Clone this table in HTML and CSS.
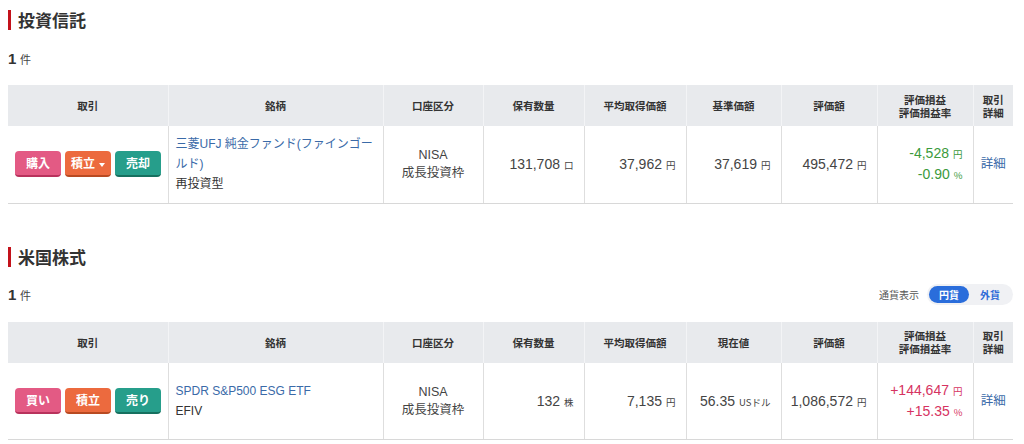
FILE: index.html
```html
<!DOCTYPE html>
<html lang="ja">
<head>
<meta charset="utf-8">
<link rel="stylesheet" href="styles.css">
</head>
<body>
<div class="page">
  <section class="sec sec-first">
    <h2 class="title">投資信託</h2>
    <div class="countbar"><div class="count"><b>1</b> <span>件</span></div></div>
    <table class="tbl">
      <colgroup>
        <col style="width:160px"><col style="width:215px"><col style="width:100px"><col style="width:101px"><col style="width:102px"><col style="width:95px"><col style="width:96px"><col style="width:96px"><col style="width:40px">
      </colgroup>
      <thead>
        <tr><th>取引</th><th>銘柄</th><th>口座区分</th><th>保有数量</th><th>平均取得価額</th><th>基準価額</th><th>評価額</th><th>評価損益<br>評価損益率</th><th>取引<br>詳細</th></tr>
      </thead>
      <tbody>
        <tr class="r1">
          <td class="btns"><span class="btn pink">購入</span><span class="btn orange">積立<i class="caret"></i></span><span class="btn teal">売却</span></td>
          <td class="name"><a class="lnk">三菱UFJ 純金ファンド(ファインゴールド)</a><div class="sub">再投資型</div></td>
          <td class="ctr">NISA<br>成長投資枠</td>
          <td class="num">131,708<span class="u">口</span></td>
          <td class="num">37,962<span class="u">円</span></td>
          <td class="num">37,619<span class="u">円</span></td>
          <td class="num">495,472<span class="u">円</span></td>
          <td class="num pl green"><div>-4,528<span class="u">円</span></div><div>-0.90<span class="u">%</span></div></td>
          <td class="ctr"><a class="lnk">詳細</a></td>
        </tr>
      </tbody>
    </table>
  </section>

  <section class="sec">
    <h2 class="title">米国株式</h2>
    <div class="countbar">
      <div class="count"><b>1</b> <span>件</span></div>
      <div class="cur"><span class="cur-label">通貨表示</span><span class="toggle"><span class="opt on">円貨</span><span class="opt">外貨</span></span></div>
    </div>
    <table class="tbl">
      <colgroup>
        <col style="width:160px"><col style="width:215px"><col style="width:100px"><col style="width:101px"><col style="width:102px"><col style="width:95px"><col style="width:96px"><col style="width:96px"><col style="width:40px">
      </colgroup>
      <thead>
        <tr><th>取引</th><th>銘柄</th><th>口座区分</th><th>保有数量</th><th>平均取得価額</th><th>現在値</th><th>評価額</th><th>評価損益<br>評価損益率</th><th>取引<br>詳細</th></tr>
      </thead>
      <tbody>
        <tr class="r2">
          <td class="btns"><span class="btn pink">買い</span><span class="btn orange">積立</span><span class="btn teal">売り</span></td>
          <td class="name"><a class="lnk">SPDR S&amp;P500 ESG ETF</a><div class="sub">EFIV</div></td>
          <td class="ctr">NISA<br>成長投資枠</td>
          <td class="num">132<span class="u">株</span></td>
          <td class="num">7,135<span class="u">円</span></td>
          <td class="num">56.35<span class="u">USドル</span></td>
          <td class="num">1,086,572<span class="u">円</span></td>
          <td class="num pl red"><div>+144,647<span class="u">円</span></div><div>+15.35<span class="u">%</span></div></td>
          <td class="ctr"><a class="lnk">詳細</a></td>
        </tr>
      </tbody>
    </table>
  </section>
</div>
</body>
</html>
```

FILE: styles.css
```css
* { box-sizing: border-box; }
html, body { margin: 0; padding: 0; background: #fff; }
body {
  font-family: "Liberation Sans", "Noto Sans CJK JP", sans-serif;
  color: #333;
  font-size: 13px;
}
.page { padding: 0 11px 0 8px; }
.sec { margin-top: 43px; }
.sec-first { margin-top: 10px; }
.title {
  margin: 0;
  font-size: 17px;
  line-height: 20px;
  font-weight: bold;
  color: #333;
  border-left: 3px solid #c3121b;
  padding-left: 7px;
  font-family: "Noto Sans CJK JP", sans-serif;
}
.countbar {
  display: flex;
  align-items: center;
  justify-content: space-between;
  height: 22px;
  margin-top: 17px;
  margin-bottom: 16px;
}
.count b { font-size: 15px; font-weight: bold; }
.count span { font-size: 11px; color: #444; font-family: "Noto Sans CJK JP", sans-serif; }
.cur { display: flex; align-items: center; gap: 8px; }
.cur-label { font-size: 10px; color: #555; font-family: "Noto Sans CJK JP", sans-serif; }
.toggle {
  display: flex;
  background: #f0f1f4;
  border-radius: 11px;
  padding: 2px;
  height: 21px;
  align-items: center;
}
.opt {
  font-size: 10px;
  font-weight: bold;
  color: #2f6ad8;
  padding: 0 11px;
  height: 17px;
  line-height: 17px;
  border-radius: 9px;
  font-family: "Noto Sans CJK JP", sans-serif;
}
.opt.on { background: #2a6ddb; color: #fff; padding: 0 10px; }
.tbl {
  width: 1005px;
  border-collapse: collapse;
  table-layout: fixed;
}
.tbl th {
  background: #e8eaed;
  height: 41px;
  font-size: 10.5px;
  font-weight: bold;
  color: #333;
  line-height: 13px;
  text-align: center;
  vertical-align: middle;
  border-left: 1px solid #f3f4f6;
  font-family: "Noto Sans CJK JP", sans-serif;
  padding: 0;
}
.tbl th:first-child { border-left: none; }
.tbl td {
  border-left: 1px solid #dedede;
  border-bottom: 1px solid #d8d8d8;
  vertical-align: middle;
  padding: 0;
}
.tbl td:first-child { border-left: none; }
.r1 td { height: 77px; }
.r2 td { height: 77px; }
.btns { text-align: left; padding-left: 7px !important; white-space: nowrap; }
.btn {
  display: inline-block;
  height: 26px;
  line-height: 24px;
  padding: 0 10px;
  border-radius: 4px;
  color: #fff;
  font-weight: bold;
  font-size: 12px;
  margin-right: 4px;
  width: 46px;
  text-align: center;
  font-family: "Noto Sans CJK JP", sans-serif;
  vertical-align: middle;
}
.btn.pink { background: #e35a84; border-bottom: 2px solid #b8325c; }
.btn.orange { background: #ec6a3e; border-bottom: 2px solid #b84a22; padding: 0; }
.btn.teal { background: #269e8b; border-bottom: 2px solid #16705f; }
.caret {
  display: inline-block;
  width: 0; height: 0;
  border-left: 3px solid transparent;
  border-right: 3px solid transparent;
  border-top: 4px solid #fff;
  margin-left: 4px;
  vertical-align: middle;
}
.name { padding: 0 3px 0 7px !important; font-size: 12px; line-height: 20px; font-family: "Liberation Sans", "Noto Sans CJK JP", sans-serif; }
.lnk { color: #3a6aa8; text-decoration: none; }
.sub { color: #333; }
.ctr { text-align: center; font-size: 12.5px; line-height: 18px; color: #444; }
.num { text-align: right; padding-right: 10px !important; font-size: 14px; color: #444; white-space: nowrap; }
.u { font-size: 9.5px; margin-left: 4px; font-family: "Noto Sans CJK JP", sans-serif; }
.pl { line-height: 20px; }
.green { color: #3b9a3c; }
.red { color: #d63361; }
```
